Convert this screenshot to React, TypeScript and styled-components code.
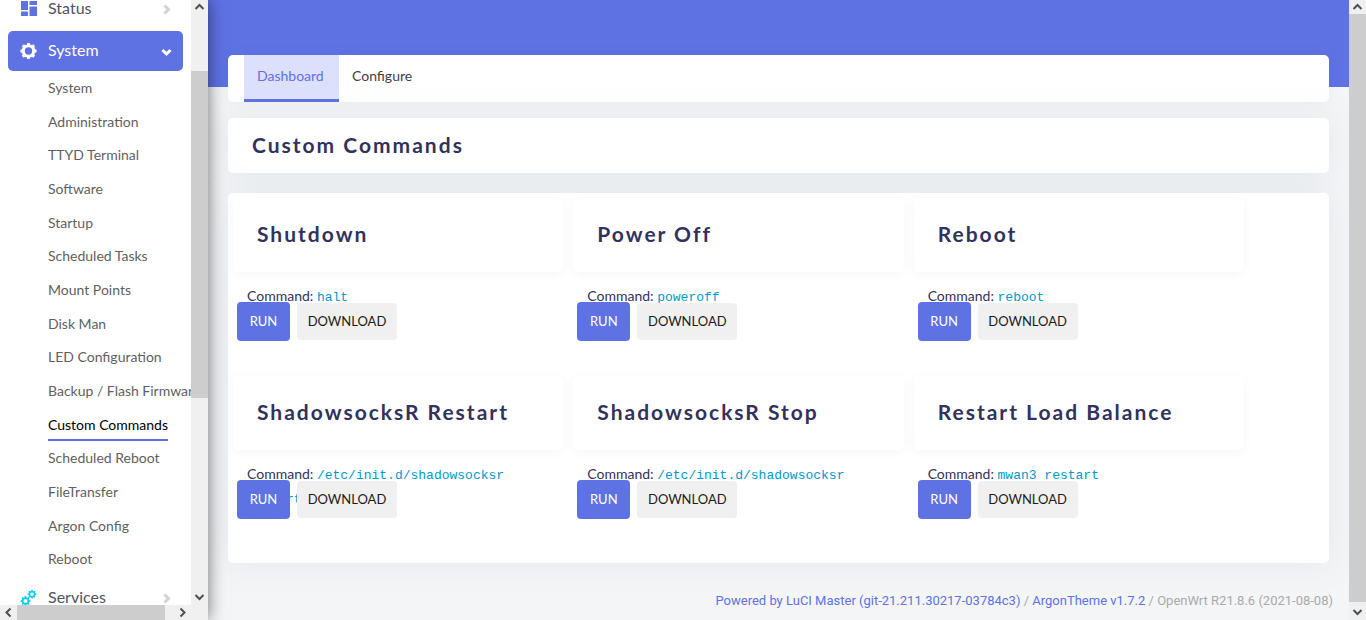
import React from "react";
import styled, { createGlobalStyle, css } from "styled-components";

const sans = `Lato, "Liberation Sans", sans-serif`;

const GlobalStyle = createGlobalStyle`
  * { box-sizing: border-box; }
  body {
    margin: 0;
    overflow: hidden;
    background: #f4f5f7;
    color: #32325d;
    font-family: ${sans};
    font-size: 14px;
  }
  a { text-decoration: none; }
`;

const Page = styled.div`
  display: flex;
  height: 100vh;
`;

const Sidebar = styled.aside`
  display: flex;
  flex-direction: column;
  flex: none;
  width: 208px;
  z-index: 1;
  background: #fff;
  box-shadow: 0 0 16px rgba(0, 0, 0, 0.55);
`;

const SidebarView = styled.div`
  display: flex;
  flex: 1;
  min-height: 0;
`;

const Nav = styled.nav`
  flex: 1;
  min-width: 0;
  overflow: hidden;
  display: flex;
  flex-direction: column;
  justify-content: flex-end;
  height: 619px;
`;

const Section = styled.a<{ $active?: boolean }>`
  display: flex;
  align-items: center;
  flex: none;
  height: 40px;
  margin: 1px 8px;
  padding: 0 11px 0 12px;
  border-radius: 5px;
  font-size: 16px;
  color: ${(p) => (p.$active ? "#fff" : "#50535f")};
  background: ${(p) => (p.$active ? "#5e72e4" : "transparent")};
  ${(p) => p.$active && css`margin-bottom: 0;`}
`;

const SectionLabel = styled.span`
  flex: 1;
  margin-left: 11px;
  padding-bottom: 3px;
`;

const SubMenu = styled.ul`
  display: flex;
  flex-direction: column;
  flex: none;
  height: 505px;
  margin: 0 0 1px;
  padding: 0 0 0 48px;
  list-style: none;
`;

const SubItem = styled.li`
  display: flex;
  flex: 1;
`;

const SubLink = styled.a<{ $active?: boolean }>`
  padding-top: 7px;
  line-height: 20px;
  white-space: nowrap;
  color: ${(p) => (p.$active ? "#000" : "#5f5f5f")};
  ${(p) => p.$active && css`border-bottom: 2px solid #5e72e4;`}
`;

const Track = styled.div<{ $horizontal?: boolean }>`
  display: flex;
  flex: none;
  flex-direction: ${(p) => (p.$horizontal ? "row" : "column")};
  ${(p) => (p.$horizontal ? css`height: 15px; padding-right: 17px;` : css`width: 17px;`)}
  background: #f0f0f0;
`;

const TrackEnd = styled.span<{ $size: number }>`
  display: flex;
  align-items: center;
  justify-content: center;
  flex: none;
  flex-basis: ${(p) => p.$size}px;
`;

const TrackGap = styled.span<{ $grow: number }>`
  flex: ${(p) => p.$grow} 1 0;
`;

const Thumb = styled.span<{ $grow: number }>`
  flex: ${(p) => p.$grow} 1 0;
  background: #cdcdcd;
`;

const Main = styled.main`
  flex: 1;
  min-width: 0;
  overflow: hidden;
  padding: 55px 20px 0;
  background: linear-gradient(#5e72e4, #5e72e4) top / 100% 87px no-repeat #f4f5f7;
`;

const Card = styled.section`
  border-radius: 5px;
  background: #fff;
  box-shadow: 0 0 32px rgba(136, 152, 170, 0.15);
`;

const Tabs = styled(Card)`
  display: flex;
  height: 47px;
  margin-bottom: 16px;
  padding: 0 16px;
  box-shadow: 0 0 16px rgba(0, 0, 0, 0.04);
`;

const Tab = styled.a<{ $active?: boolean }>`
  min-width: 95px;
  padding: 11px 13px 0;
  line-height: 20px;
  color: ${(p) => (p.$active ? "#5e72e4" : "#404040")};
  ${(p) => p.$active && css`
    background: #dce0fd;
    border-bottom: 3px solid #5e72e4;
  `}
`;

const TitleCard = styled(Card)`
  margin-bottom: 20px;
  padding: 12px 24px 13px;
`;

const Title = styled.h2`
  margin: 0;
  font-size: 21px;
  line-height: 30px;
  font-weight: 700;
  letter-spacing: 2px;
`;

const CommandGrid = styled(Card)`
  display: grid;
  grid-template-columns: repeat(3, 1fr);
  padding: 5px 80px 9px 0;
`;

const Command = styled.article`
  height: 178px;
  padding: 0 5px;
`;

const CommandHead = styled.header`
  height: 74px;
  padding: 21px 24px;
  border-radius: 5px;
  box-shadow: 0 2px 12px rgba(0, 0, 0, 0.04);
`;

const CommandLine = styled.p`
  height: 17px;
  margin: 13px 14px 0;
  line-height: 22px;
`;

const Code = styled.code`
  font-family: "Liberation Mono", monospace;
  font-size: 13px;
  color: #0099cc;
`;

const Actions = styled.div`
  position: relative;
  display: flex;
  align-items: center;
  gap: 7px;
  padding-left: 4px;
`;

const Button = styled.button<{ $primary?: boolean }>`
  width: ${(p) => (p.$primary ? 53 : 100)}px;
  height: ${(p) => (p.$primary ? 39 : 37)}px;
  padding: 0 0 2px;
  border: 0;
  border-radius: 4px;
  font-family: inherit;
  font-size: 13px;
  color: ${(p) => (p.$primary ? "#fff" : "#1c1c1c")};
  background: ${(p) => (p.$primary ? "#5e72e4" : "#f0f0f0")};
`;

const Footer = styled.footer`
  margin: 28px -4px 0 0;
  text-align: right;
  font-family: Roboto, ${sans};
  font-size: 13px;
  line-height: 20px;
  color: #aaa;
  a { color: #5e72e4; }
`;

const angles = {
  up: "M1.5 7 5.5 3l4 4",
  down: "M1.5 4 5.5 8l4-4",
  left: "M7.5 1.5 3.5 5.5l4 4",
  right: "M3.5 1.5 7.5 5.5l-4 4",
};

function Arrow({ dir, color = "#505050", width = 2 }: { dir: keyof typeof angles; color?: string; width?: number }) {
  return (
    <svg width="11" height="11" viewBox="0 0 11 11" fill="none" stroke={color} strokeWidth={width}>
      <path d={angles[dir]} />
    </svg>
  );
}

function gearPath(cx: number, cy: number, r: number, tooth: number, hole: number, teeth: number) {
  const points: string[] = [];
  for (let i = 0; i < teeth; i++) {
    const a = (i * 2 * Math.PI) / teeth;
    const step = Math.PI / teeth;
    [[r, -0.62], [tooth, -0.4], [tooth, 0.4], [r, 0.62]].forEach(([d, o]) =>
      points.push(`${(cx + d * Math.sin(a + o * step)).toFixed(2)} ${(cy - d * Math.cos(a + o * step)).toFixed(2)}`)
    );
  }
  return `M${points.join("L")}ZM${cx - hole} ${cy}a${hole} ${hole} 0 1 0 ${hole * 2} 0a${hole} ${hole} 0 1 0 ${-hole * 2} 0Z`;
}

function StatusIcon() {
  return (
    <svg width="17" height="17" viewBox="0 0 17 17" fill="#5e72e4">
      <path d="M1 0h7v9H1zM1 10.5h7V15H1zM9.5 0H17v4H9.5zM9.5 5.5H17V15H9.5z" />
    </svg>
  );
}

function SystemIcon() {
  return (
    <svg width="17" height="17" viewBox="0 0 17 17" fill="#fff" fillRule="evenodd">
      <path d={gearPath(8.5, 8, 6.8, 8.2, 3.7, 8)} />
    </svg>
  );
}

function ServicesIcon() {
  return (
    <svg width="17" height="17" viewBox="0 0 17 17" fill="#11cdef" fillRule="evenodd">
      <path d={gearPath(5.5, 11, 3.9, 5, 2, 8)} />
      <path d={gearPath(12, 4.2, 3.5, 4.4, 1.8, 8)} />
    </svg>
  );
}

const systemPages = [
  "System", "Administration", "TTYD Terminal", "Software", "Startup",
  "Scheduled Tasks", "Mount Points", "Disk Man", "LED Configuration",
  "Backup / Flash Firmware", "Custom Commands", "Scheduled Reboot",
  "FileTransfer", "Argon Config", "Reboot",
];

const commands = [
  { name: "Shutdown", line: "halt" },
  { name: "Power Off", line: "poweroff" },
  { name: "Reboot", line: "reboot" },
  { name: "ShadowsocksR Restart", line: "/etc/init.d/shadowsocksr restart" },
  { name: "ShadowsocksR Stop", line: "/etc/init.d/shadowsocksr" },
  { name: "Restart Load Balance", line: "mwan3 restart" },
];

export default function App() {
  return (
    <Page>
      <GlobalStyle />
      <Sidebar>
        <SidebarView>
          <Nav>
            <Section href="#status">
              <StatusIcon />
              <SectionLabel>Status</SectionLabel>
              <Arrow dir="right" color="#ced4da" width={3} />
            </Section>
            <Section href="#system" $active>
              <SystemIcon />
              <SectionLabel>System</SectionLabel>
              <Arrow dir="down" color="#fff" width={3} />
            </Section>
            <SubMenu>
              {systemPages.map((page) => (
                <SubItem key={page}>
                  <SubLink href="#page" $active={page === "Custom Commands"}>{page}</SubLink>
                </SubItem>
              ))}
            </SubMenu>
            <Section href="#services">
              <ServicesIcon />
              <SectionLabel>Services</SectionLabel>
              <Arrow dir="right" color="#ced4da" width={3} />
            </Section>
          </Nav>
          <Track>
            <TrackEnd $size={14}><Arrow dir="up" /></TrackEnd>
            <TrackGap $grow={57} />
            <Thumb $grow={327} />
            <TrackGap $grow={190} />
            <TrackEnd $size={17}><Arrow dir="down" /></TrackEnd>
          </Track>
        </SidebarView>
        <Track $horizontal>
          <TrackEnd $size={17}><Arrow dir="left" /></TrackEnd>
          <Thumb $grow={148} />
          <TrackGap $grow={9} />
          <TrackEnd $size={17}><Arrow dir="right" /></TrackEnd>
        </Track>
      </Sidebar>
      <Main>
        <Tabs as="nav">
          <Tab href="#dashboard" $active>Dashboard</Tab>
          <Tab href="#configure">Configure</Tab>
        </Tabs>
        <TitleCard>
          <Title>Custom Commands</Title>
        </TitleCard>
        <CommandGrid>
          {commands.map(({ name, line }) => (
            <Command key={name}>
              <CommandHead>
                <Title as="h3">{name}</Title>
              </CommandHead>
              <CommandLine>Command: <Code>{line}</Code></CommandLine>
              <Actions>
                <Button type="button" $primary>RUN</Button>
                <Button type="button">DOWNLOAD</Button>
              </Actions>
            </Command>
          ))}
        </CommandGrid>
        <Footer>
          <a href="#luci">Powered by LuCI Master (git-21.211.30217-03784c3)</a> / <a href="#theme">ArgonTheme v1.7.2</a> / OpenWrt R21.8.6 (2021-08-08)
        </Footer>
      </Main>
      <Track>
        <TrackEnd $size={14}><Arrow dir="up" /></TrackEnd>
        <Thumb $grow={588} />
        <TrackEnd $size={18}><Arrow dir="down" /></TrackEnd>
      </Track>
    </Page>
  );
}
